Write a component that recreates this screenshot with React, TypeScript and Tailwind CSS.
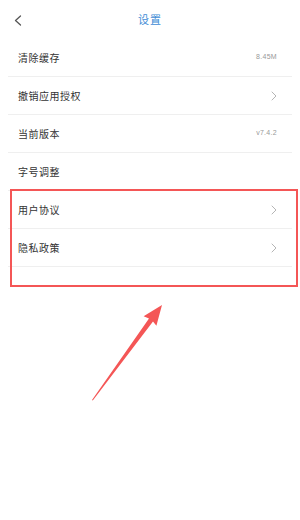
import React from 'react';

const rows = [
  { label: '清除缓存', value: '8.45M' },
  { label: '撤销应用授权', arrow: true },
  { label: '当前版本', value: 'v7.4.2' },
  { label: '字号调整' },
  { label: '用户协议', arrow: true },
  { label: '隐私政策', arrow: true },
];

const Chevron = () => (
  <svg width="6" height="10" viewBox="0 0 6 10" fill="none" stroke="#b5b5b5" strokeWidth="1" strokeLinecap="round" strokeLinejoin="round">
    <path d="M1 1l4 4-4 4" />
  </svg>
);

export default function App() {
  return (
    <div className="relative w-[300px] h-[520px] bg-white overflow-hidden" style={{ fontFamily: '"Noto Sans CJK SC", "Noto Sans", sans-serif' }}>
      <div className="h-[39px] flex items-center justify-center relative">
        <svg className="absolute left-[14px] top-[15px]" width="8" height="11" viewBox="0 0 8 11" fill="none" stroke="#555" strokeWidth="1.3" strokeLinecap="round" strokeLinejoin="round">
          <path d="M6.5 1L1.5 5.5l5 4.5" />
        </svg>
        <span className="text-[11px] text-[#3f8dd6] tracking-[1px]">设置</span>
      </div>
      <div className="mx-2">
        {rows.map((r) => (
          <div key={r.label} className="h-[38px] border-b border-[#efefef] flex items-center justify-between pl-[10px] pr-[15px]">
            <span className="text-[10px] text-[#333] tracking-[0.5px]">{r.label}</span>
            {r.value && <span className="text-[7px] text-[#999] tracking-[0.3px]" style={{ fontFamily: '"Liberation Sans", sans-serif' }}>{r.value}</span>}
            {r.arrow && <Chevron />}
          </div>
        ))}
      </div>
      <div className="absolute left-[10px] top-[189px] w-[288px] h-[98px] border-2 border-[#f45656]" />
      <svg className="absolute left-0 top-0" width="300" height="520" viewBox="0 0 300 520">
        <polygon points="92,400 149,318.5 143.6,316.3 162,305 156.4,325.7 153,321.5 92.8,400.5" fill="#f45656" />
      </svg>
    </div>
  );
}
